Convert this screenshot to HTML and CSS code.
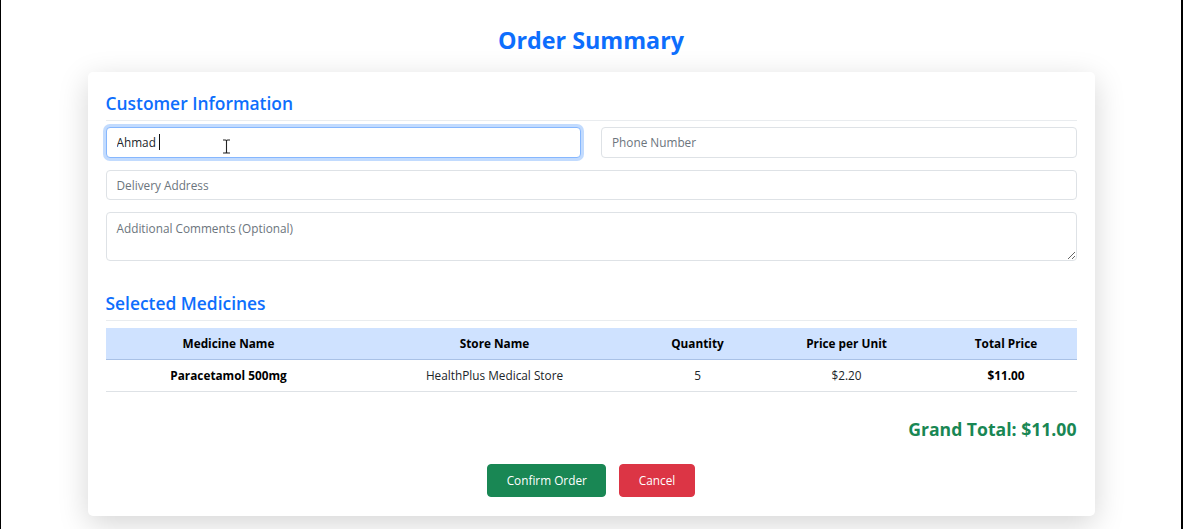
FILE: index.html
```html
<!DOCTYPE html>
<html lang="en">
<head>
<meta charset="utf-8">
<title>Order Summary</title>
<link rel="stylesheet" href="styles.css">
</head>
<body>
<div class="frame">
  <h2 class="page-title">Order Summary</h2>
  <div class="card">
    <h4 class="section-title">Customer Information</h4>
    <div class="row">
      <div class="field focus-wrap">
        <input class="input focused" type="text" value="Ahmad" placeholder="Full Name">
        <span class="caret"></span>
        <svg class="ibeam" width="9" height="15" viewBox="0 0 9 15"><path d="M1 1h2.5q1 0 1 1v11q0 1 1 1H8M8 1H5.5q-1 0-1 1M4.5 13q0 1-1 1H1" fill="none" stroke="#222" stroke-width="1.1"/></svg>
      </div>
      <div class="field">
        <input class="input" type="text" placeholder="Phone Number">
      </div>
    </div>
    <div class="row">
      <div class="field">
        <input class="input" type="text" placeholder="Delivery Address">
      </div>
    </div>
    <div class="row">
      <div class="field">
        <textarea class="input textarea" rows="2" placeholder="Additional Comments (Optional)"></textarea>
      </div>
    </div>

    <h4 class="section-title second">Selected Medicines</h4>
    <table class="table">
      <colgroup>
        <col class="c1"><col class="c2"><col class="c3"><col class="c4"><col class="c5">
      </colgroup>
      <thead>
        <tr>
          <th>Medicine Name</th>
          <th>Store Name</th>
          <th>Quantity</th>
          <th>Price per Unit</th>
          <th>Total Price</th>
        </tr>
      </thead>
      <tbody>
        <tr>
          <td class="strong">Paracetamol 500mg</td>
          <td>HealthPlus Medical Store</td>
          <td>5</td>
          <td>$2.20</td>
          <td class="strong">$11.00</td>
        </tr>
      </tbody>
    </table>

    <div class="grand-total">Grand Total: $11.00</div>

    <div class="actions">
      <button class="btn btn-success">Confirm Order</button>
      <button class="btn btn-danger">Cancel</button>
    </div>
  </div>
</div>
</body>
</html>
```
FILE: styles.css
```css
* { box-sizing: border-box; }
html, body { margin: 0; padding: 0; background: #fff; }
body {
  font-family: "Open Sans", "Noto Sans", sans-serif;
  font-size: 11.8px;
  color: #212529;
}
.frame {
  min-height: 529px;
  border-left: 1px solid #000;
  border-right: 2px solid #000;
  padding-top: 25px;
  overflow: hidden;
}
.page-title {
  margin: 0;
  text-align: center;
  font-size: 23.3px;
  line-height: 31px;
  font-weight: 700;
  color: #0d6efd;
}
.card {
  width: 1007px;
  margin: 16px auto 0;
  background: #fff;
  border-radius: 5px;
  padding: 19px 18px 19px;
  box-shadow: 0 8px 30px rgba(0,0,0,0.17);
}
.section-title {
  margin: 0 0 6px;
  font-size: 17.4px;
  line-height: 24px;
  font-weight: 600;
  color: #0d6efd;
  padding-bottom: 5px;
  border-bottom: 1px solid #e9ecef;
}
.section-title.second { margin-top: 30px; }
.row {
  display: flex;
  gap: 20px;
  margin-bottom: 12px;
}
.field { flex: 1; position: relative; }
.input {
  display: block;
  width: 100%;
  height: 30.5px;
  padding: 4px 10px;
  font-family: inherit;
  font-size: 11.8px;
  color: #212529;
  background: #fff;
  border: 1px solid #dee2e6;
  border-radius: 4px;
  outline: none;
}
.input::placeholder { color: #6c757d; }
.input.focused {
  border-color: #86b7fe;
  box-shadow: 0 0 0 3px rgba(13,110,253,0.25);
}
.textarea {
  height: 49px;
  resize: vertical;
  padding: 6px 10px;
  line-height: 18px;
}
.caret {
  position: absolute;
  left: 53px;
  top: 7px;
  width: 1px;
  height: 16px;
  background: #111;
}
.ibeam {
  position: absolute;
  left: 116px;
  top: 12px;
}
.table {
  width: 100%;
  border-collapse: collapse;
  table-layout: fixed;
  margin-top: 7px;
}
.c1 { width: 246px; }
.c2 { width: 286px; }
.c3 { width: 120px; }
.c4 { width: 178px; }
.c5 { width: 141px; }
.table th, .table td {
  text-align: center;
  padding: 6px 8px;
  line-height: 19px;
  font-size: 11.8px;
}
.table th {
  background: #cfe2ff;
  color: #000;
  font-weight: 700;
  border-bottom: 1px solid #a9c1e6;
}
.table td {
  border-bottom: 1px solid #dee2e6;
  color: #212529;
}
.table td.strong { font-weight: 700; color: #000; }
.grand-total {
  margin-top: 25px;
  text-align: right;
  font-size: 17.6px;
  line-height: 24px;
  font-weight: 700;
  color: #198754;
}
.actions {
  display: flex;
  justify-content: center;
  gap: 13px;
  margin-top: 23px;
}
.btn {
  font-family: inherit;
  font-size: 11.8px;
  line-height: 19px;
  padding: 6px 18.5px;
  border-radius: 4px;
  border: 1px solid transparent;
  color: #fff;
  cursor: pointer;
}
.btn-success { background: #198754; border-color: #198754; }
.btn-danger { background: #dc3545; border-color: #dc3545; }
```
